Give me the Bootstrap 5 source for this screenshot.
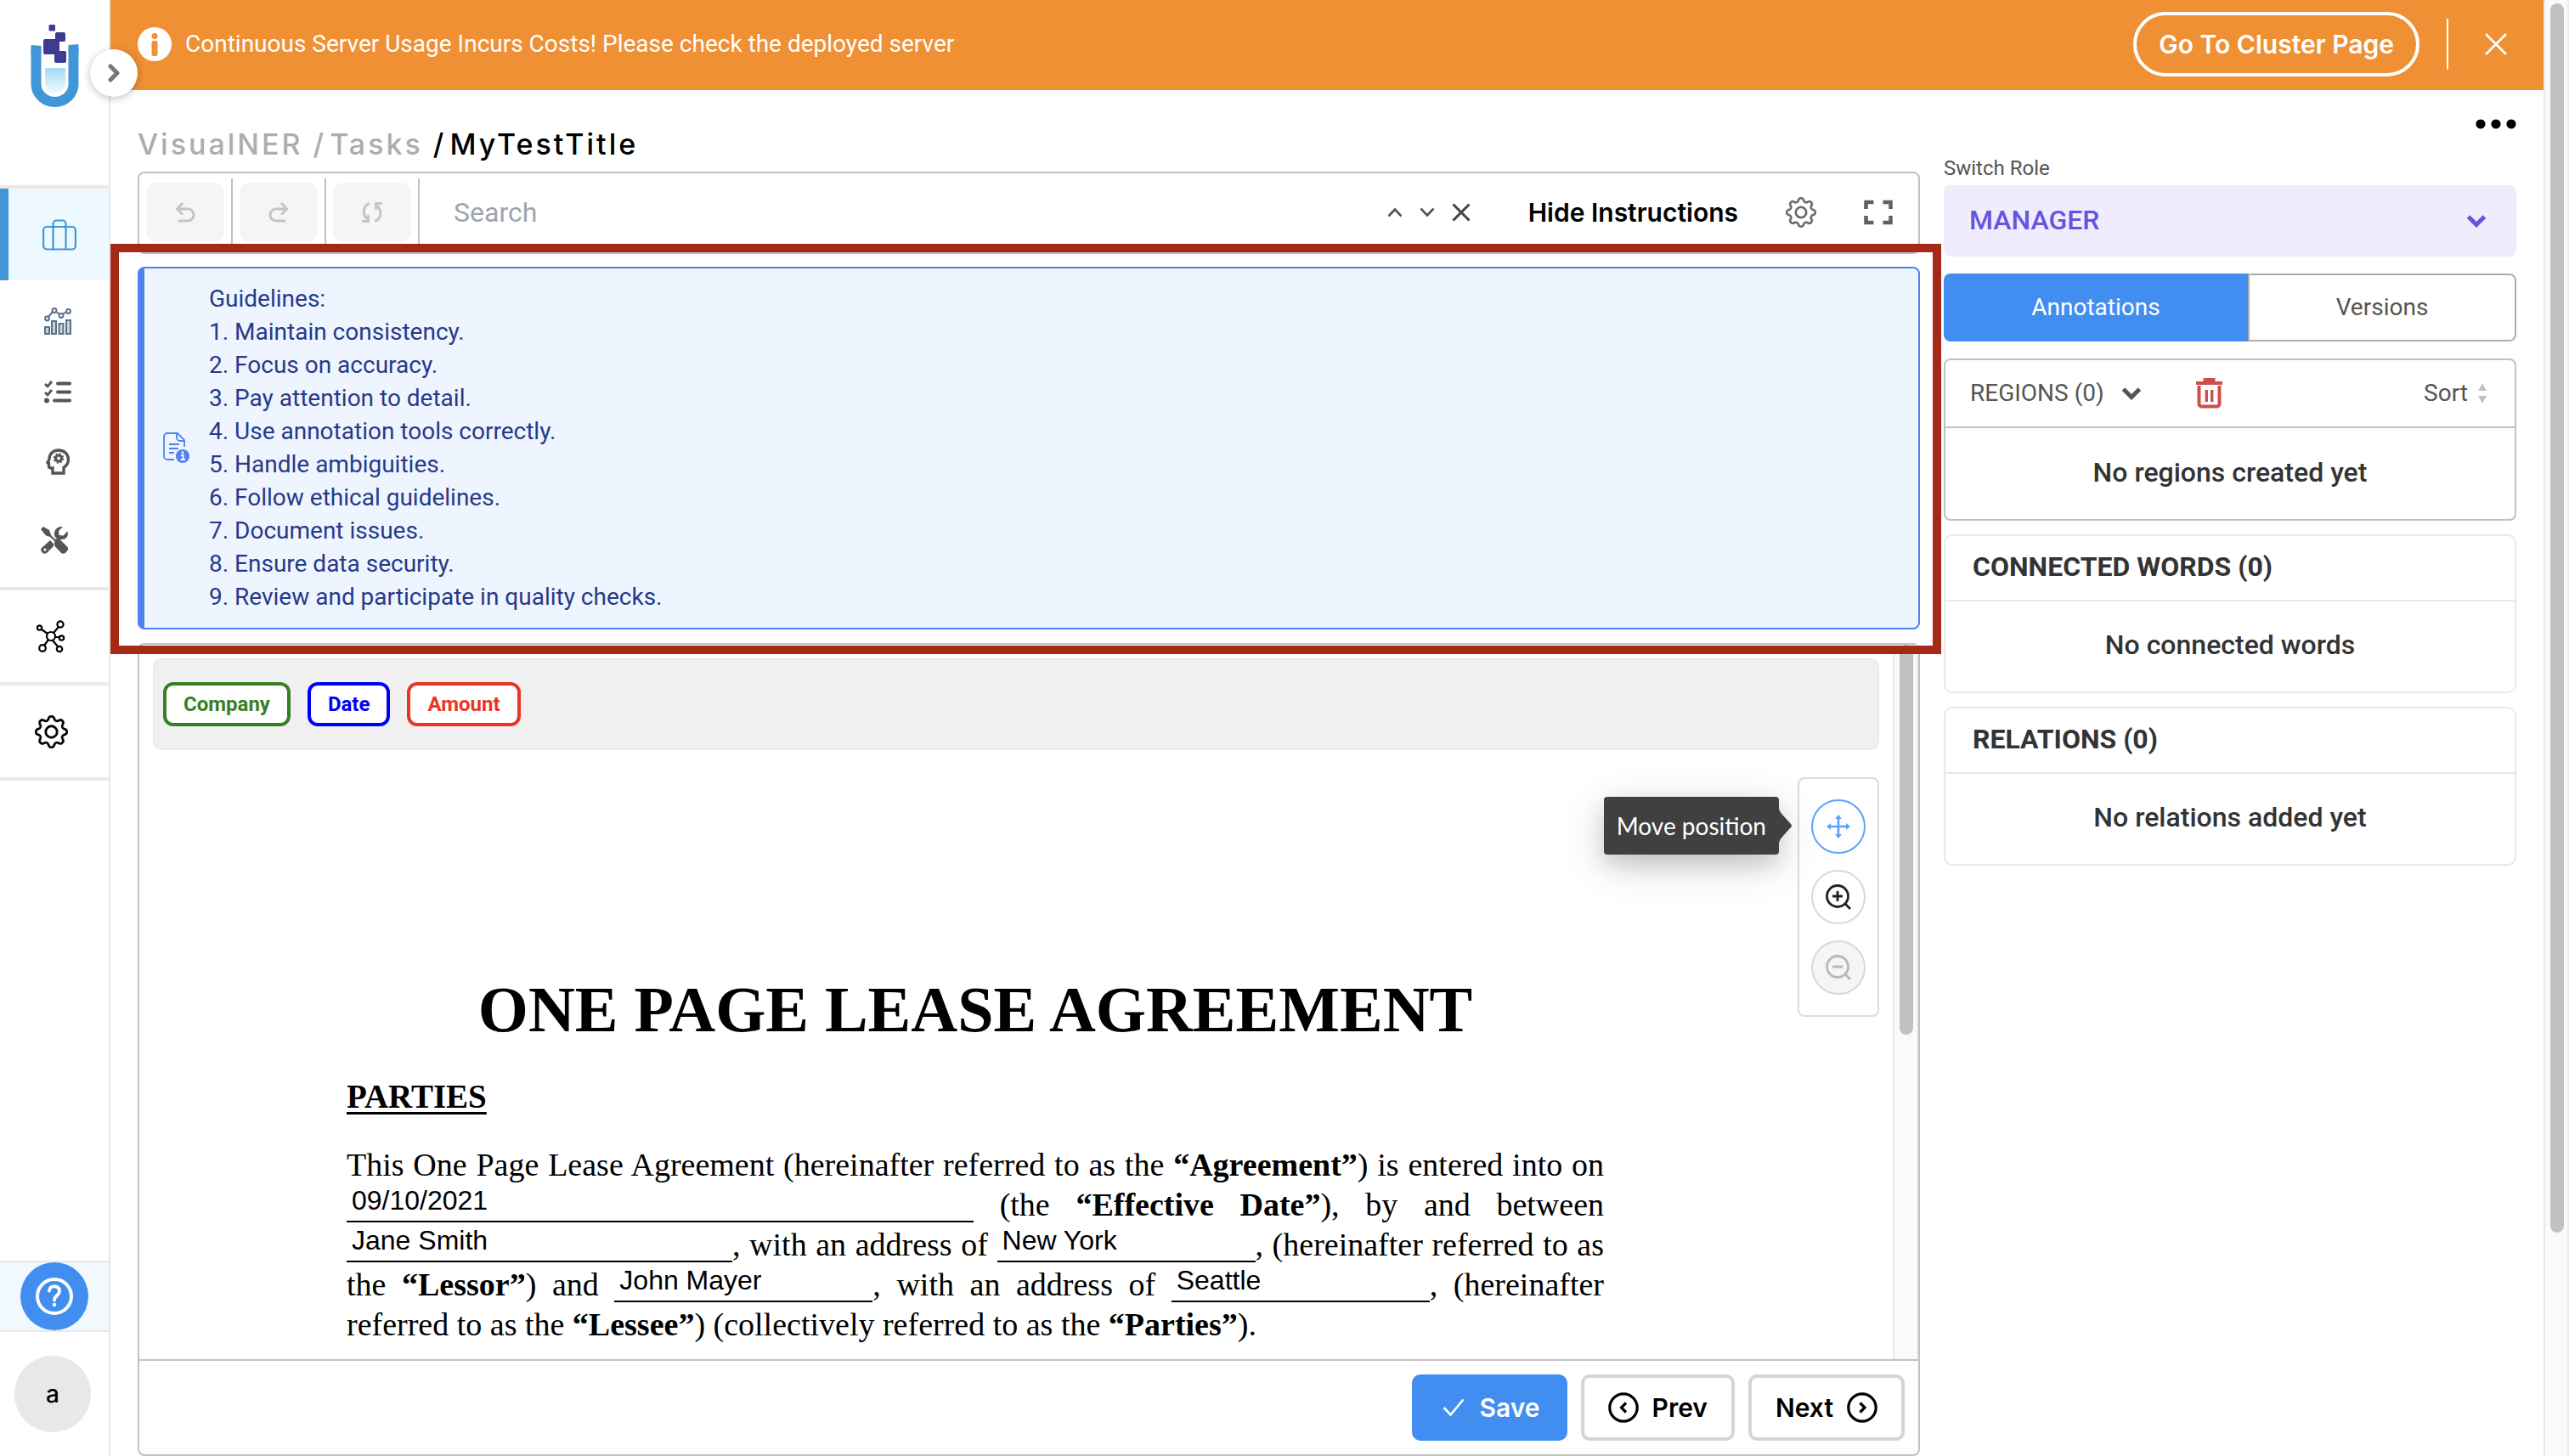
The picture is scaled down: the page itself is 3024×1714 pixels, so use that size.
<!DOCTYPE html>
<html lang="en">
<head>
<meta charset="utf-8">
<meta name="viewport" content="width=device-width, initial-scale=1">
<title>VisualNER - MyTestTitle</title>
<link href="https://cdn.jsdelivr.net/npm/bootstrap@5.3.0/dist/css/bootstrap.min.css" rel="stylesheet">
<style>
body{font-family:Roboto,"Liberation Sans",sans-serif;font-size:28px;line-height:40px;color:#333;background:#fff}
button{font-family:inherit;color:inherit}
svg{display:block;flex:none}
.plain{background:none;border:0;padding:0}
.brandfont{font-family:Inter,"Liberation Sans",sans-serif}
.shrinkable{min-width:0}
/* sidebar */
.side{width:130px;border-right:2px solid #e8e8e8;position:relative}
.side-link{display:flex;align-items:center;justify-content:center;color:#555;width:100%}
.side-top{height:222px;padding:28px 0 0 36px;border-bottom:4px solid #e9e9e9}
.side-active{height:108px;background:#eef9ff;border-left:10px solid #4096d6;color:#4096d6;padding-left:2px}
.side-group{height:365px;padding:32px 0 38px 8px;gap:53px;border-bottom:4px solid #e9e9e9}
.side-single{height:112px;border-bottom:4px solid #e9e9e9;color:#000;padding-right:8px}
.side-help{height:84px;border-top:2px solid #e8e8e8;border-bottom:2px solid #e8e8e8;background:#f1f9ff}
.help-dot{width:80px;height:80px;border-radius:50%;background:#418ef0;display:flex;align-items:center;justify-content:center;color:#fff}
.avatar{width:90px;height:90px;border-radius:50%;background:#e8e8e8;color:#000;font-weight:500;margin:28px 0 28px 17px}
.side-toggle{position:absolute;left:106px;top:58px;width:56px;height:56px;border-radius:50%;background:#fff;color:#777;box-shadow:0 2px 10px rgba(0,0,0,.25);z-index:5;display:flex;align-items:center;justify-content:center}
/* banner */
.banner{height:106px;background:#ef9034;color:#fff;padding:0 42px 2px 32px}
.btn-cluster{height:76px;border:4px solid #fff;border-radius:38px;font-size:30px;font-weight:600;padding:0 26px;color:#fff}
.banner-rule{width:2px;height:60px;background:#fff;margin:0 42px 0 32px}
/* main column */
.work{padding:0 32px 0 32px;gap:28px;min-height:0}
.crumbs{height:96px;padding-top:44px;font-size:34px;letter-spacing:3px;color:#adadad;font-weight:500;gap:4px}
.crumbs a{color:inherit;text-decoration:none}
.crumbs .here{color:#000}
.toolbar{height:97px;border:2px solid #c1c1c1;border-radius:8px;margin-bottom:15px;padding:0 30px 2px 0}
.tool-cell{height:80px;padding:5px 8px;border-right:2px solid #c1c1c1}
.tool-btn{width:92px;height:70px;border-radius:12px;background:#f5f5f5;color:#c4c4c4;display:flex;align-items:center;justify-content:center}
.find{font-size:32px;border:0;padding:0 0 0 40px;color:#333;outline:0;min-width:0}
.find::placeholder{color:#9ca3af;opacity:1}
.btn-hide{font-size:30px;font-weight:600;color:#000;margin:0 56px 0 68px}
.guide{position:relative;margin-bottom:16px}
.guide-box{background:#eef5fe;border:2px solid #4f82f0;border-left-width:8px;border-radius:8px;padding:16px 22px 17px;color:#26398a;gap:22px;line-height:39px}
.guide-mark{position:absolute;left:-32px;right:-25px;top:-27px;bottom:-29px;border:10px solid #a42a17;z-index:4;pointer-events:none}
.editor{border:2px solid #c1c1c1;border-radius:8px;min-height:0}
.stage{min-height:0;overflow:hidden}
.canvas{position:relative;padding:16px}
.labels{height:108px;background:#f0f0f0;border:2px solid #e9e9e9;border-radius:10px;gap:20px;padding:0 10px}
.chip{height:52px;border:4px solid;border-radius:12px;background:#fff;font-size:24px;font-weight:700;padding:0 20px;line-height:44px}
.chip-company{color:#377f23}.chip-date{color:#0000f5}.chip-amount{color:#ea3424}
.rail{width:30px;background:#fafafa;border-left:2px solid #e8e8e8;border-right:2px solid #ececec;padding:0 4px 0 6px}
.rail-thumb{width:16px;border-radius:8px;background:#c1c1c1}
.zoomer{position:absolute;right:16px;top:156px;width:96px;border:2px solid #dcdcdc;border-radius:8px;background:#fff;padding:24px 14px;gap:19px}
.round{width:64px;height:64px;border-radius:50%;border:2px solid #d9d9d9;background:#fff;color:#222;display:flex;align-items:center;justify-content:center}
.round.on{border-color:#5ba4fa;color:#5ba4fa}
.round.off{background:#f5f5f5;color:#b8b8b8}
.tip-box{position:absolute;right:134px;top:179px;height:68px;padding:14px 15px;background:#404040;color:#fff;border-radius:4px;font-family:Lato,sans-serif;box-shadow:0 12px 50px rgba(0,0,0,.17),0 12px 24px rgba(0,0,0,.12);white-space:nowrap}
.tip-box svg{position:absolute;left:100%;top:14px}
/* lease text */
.lease{width:1480px;margin:263px 0 0 228px;font-family:"Liberation Serif",serif;color:#000;font-size:38px;line-height:47px}
.lease h1{font-size:76px;line-height:84px;font-weight:700;text-align:center;margin:0 0 37px;white-space:nowrap}
.lease h2{font-size:39px;line-height:48px;font-weight:700;text-decoration:underline;text-decoration-thickness:3px;text-underline-offset:5px;margin:0 0 33px}
.ln{height:47px;text-align:justify;text-align-last:justify;white-space:nowrap}
.ln.end{text-align-last:left}
.fill{display:inline-block;width:304px;border-bottom:2px solid #000;font:32px/32px "Liberation Sans",sans-serif;vertical-align:7px;padding:0 0 8px 6px;text-align:left;text-align-last:left}
.fill.f-date{width:738px}.fill.f-name{width:454px}
/* footer */
.foot{height:112px;border-top:2px solid #c1c1c1;padding:0 16px;gap:16px}
.btn-step{height:78px;border-radius:10px;border:4px solid #d4d4da;background:#fff;color:#000;font-size:30px;font-weight:600;padding:0 28px;gap:16px}
.btn-step.go{background:#418ef0;border-color:#418ef0;color:#fff;gap:18px}
/* right panel */
.panel{width:674px}
.dots-row{padding-top:34px}
.role-label{font-size:24px;line-height:32px;color:#555;margin:30px 0 4px}
.role{height:84px;border:0;border-radius:8px;background:#f0ecfe;color:#6554dd;font-size:32px;font-weight:500;padding:0 30px 2px;appearance:none;width:100%}
.role-arrow{position:absolute;right:35px;top:34px;color:#6554dd;pointer-events:none}
.tabs{height:80px;margin:20px 0}
.tab-on{background:#418ef0;color:#fff;border-radius:8px 0 0 8px;width:358px}
.tab-off{border:2px solid #adadad;border-radius:0 8px 8px 0;color:#555}
.box{border:2px solid #e8e8e8;border-radius:10px;margin-bottom:16px;font-weight:500;font-size:32px}
.box-head{height:77px;border-bottom:2px solid #e8e8e8;padding:0 32px 3px;font-weight:700;font-size:32px}
.box-body{height:106px;padding-bottom:4px}
.box.strong{border-color:#c1c1c1;border-radius:8px}
.box.strong .box-head{height:80px;border-color:#c1c1c1;padding:0 29px;font-size:28px;font-weight:400;color:#555}
.box.strong .box-body{height:107px}
.fold{gap:20px}
</style>
</head>
<body>
<svg width="0" height="0" class="position-absolute" aria-hidden="true">
<symbol id="gear" viewBox="0 0 16 16"><g fill="currentColor" stroke="currentColor" stroke-width=".15"><path d="M8 4.754a3.246 3.246 0 1 0 0 6.492 3.246 3.246 0 0 0 0-6.492zM5.754 8a2.246 2.246 0 1 1 4.492 0 2.246 2.246 0 0 1-4.492 0z"/><path d="M9.796 1.343c-.527-1.79-3.065-1.79-3.592 0l-.094.319a.873.873 0 0 1-1.255.52l-.292-.16c-1.64-.892-3.433.902-2.54 2.541l.159.292a.873.873 0 0 1-.52 1.255l-.319.094c-1.79.527-1.79 3.065 0 3.592l.319.094a.873.873 0 0 1 .52 1.255l-.16.292c-.892 1.64.901 3.434 2.541 2.54l.292-.159a.873.873 0 0 1 1.255.52l.094.319c.527 1.79 3.065 1.79 3.592 0l.094-.319a.873.873 0 0 1 1.255-.52l.292.16c1.64.893 3.434-.902 2.54-2.541l-.159-.292a.873.873 0 0 1 .52-1.255l.319-.094c1.79-.527 1.79-3.065 0-3.592l-.319-.094a.873.873 0 0 1-.52-1.255l.16-.292c.893-1.64-.902-3.433-2.541-2.54l-.292.159a.873.873 0 0 1-1.255-.52l-.094-.319zm-2.633.283c.246-.835 1.428-.835 1.674 0l.094.319a1.873 1.873 0 0 0 2.693 1.115l.291-.16c.764-.415 1.6.42 1.184 1.185l-.159.292a1.873 1.873 0 0 0 1.116 2.692l.318.094c.835.246.835 1.428 0 1.674l-.319.094a1.873 1.873 0 0 0-1.115 2.693l.16.291c.415.764-.42 1.6-1.185 1.184l-.291-.159a1.873 1.873 0 0 0-2.693 1.116l-.094.318c-.246.835-1.428.835-1.674 0l-.094-.319a1.873 1.873 0 0 0-2.692-1.115l-.292.16c-.764.415-1.6-.42-1.184-1.185l.159-.291A1.873 1.873 0 0 0 1.945 8.93l-.319-.094c-.835-.246-.835-1.428 0-1.674l.319-.094A1.873 1.873 0 0 0 3.06 4.377l-.16-.292c-.415-.764.42-1.6 1.185-1.184l.292.159a1.873 1.873 0 0 0 2.692-1.115l.094-.319z"/></g></symbol>
<symbol id="caret" viewBox="0 0 24 16"><path d="M2.500 3l9.500 9.500L21.500 3" fill="none" stroke="currentColor" stroke-width="5"/></symbol>
<linearGradient id="liquid" x1="0" y1="0" x2="0" y2="1"><stop offset="0" stop-color="#a5d9f5"/><stop offset="1" stop-color="#f2faff"/></linearGradient>
</svg>

<div class="d-flex vh-100 overflow-hidden">
  <nav class="side d-flex flex-column flex-shrink-0" aria-label="Main">
    <a href="#" class="side-top d-block" aria-label="Home">
      <svg width="57" height="98" viewBox="0 0 57 98"><path d="M6.500 30v41a22 21 0 0 0 44 0V29" fill="none" stroke="#4096d6" stroke-width="12"/><path d="M.500 25l12 1v8H.500zM44.500 25l12-1v10h-12z" fill="#4096d6"/><path d="M17 52h24v18a12 12 0 0 1-24 0z" fill="url(#liquid)"/><g fill="#3e3c92"><rect x="21.500" y="1" width="7.500" height="7.500" rx="1.500"/><rect x="29" y="10" width="12" height="11" rx="2"/><rect x="15" y="18" width="19" height="18" rx="2"/><rect x="28" y="32" width="14" height="14" rx="2"/></g></svg>
    </a>
    <button class="side-toggle plain bg-white" aria-label="Expand menu"><svg width="14" height="22" viewBox="0 0 14 22" fill="none" stroke="currentColor" stroke-width="5" stroke-linecap="round" stroke-linejoin="round"><path d="M3 3l8 8-8 8"/></svg></button>
    <a href="#" class="side-link side-active" aria-label="Projects"><svg width="40" height="37" viewBox="0 0 40 37" fill="none" stroke="currentColor" stroke-width="2.200"><rect x="1.100" y="9" width="37.800" height="26.500" rx="4"/><path d="M12.500 35V5.500a4 4 0 0 1 4-4h7a4 4 0 0 1 4 4V35"/></svg></a>
    <div class="side-group d-flex flex-column">
      <a href="#" class="side-link" aria-label="Analytics"><svg width="32" height="32" viewBox="0 0 32 32" fill="#cbd1d8" stroke="#5b7189" stroke-width="2"><path d="M1 23h5v8H1zM9 16h5v15H9zM17.500 19h5v12h-5zM26 15h5v16h-5z"/><path d="M5 11l5-6M14 5l4 3M22 8l4-3" fill="none"/><g fill="#fff"><circle cx="3.500" cy="13" r="2.400"/><circle cx="12" cy="3.500" r="2.400"/><circle cx="20" cy="9.500" r="2.400"/><circle cx="28.500" cy="4.500" r="2.400"/></g></svg></a>
      <a href="#" class="side-link" aria-label="Tasks"><svg width="32" height="28" viewBox="0 0 32 28" fill="none" stroke="currentColor"><path d="M16 4.500h14M16 14.500h14M12 24.500h18" stroke-width="4" stroke-linecap="round"/><path d="M1 5l3 3 5-6M1 15l3 3 5-6" stroke-width="2.800"/><circle cx="3" cy="24.500" r="3" fill="currentColor" stroke="none"/></svg></a>
      <a href="#" class="side-link" aria-label="Models"><svg width="28" height="31" viewBox="0 0 28 31" fill="none" stroke="currentColor"><path d="M8 29v-6H5.500a2 2 0 0 1-2-2v-3.500L2 16.500l2-4C4 6 9 2 15 2c7 0 11.500 5 11.500 11 0 4.500-2 7-5.500 9.500V29z" stroke-width="3.400"/><circle cx="15" cy="11.500" r="3.500" stroke-width="3.200"/><circle cx="15" cy="11.500" r="5.400" stroke-width="1.800" stroke-dasharray="2.120 2.120"/></svg></a>
      <a href="#" class="side-link pe-2 pt-2" aria-label="Tools"><svg width="32" height="32" viewBox="0 0 32 32" fill="currentColor"><path d="M0 3l3-3 7 4 2 6 5 5c3-1.500 5-.5 6.500 1l8 8c1 1.500 1 3-.5 4.500l-2 2.500c-1.500 1-3.500 1-5 0l-7-7.500c-1.500-2-1.500-4-.5-6l-5.500-5.500-5-1.500L0 3z"/><path d="M26 0l-5 5 .500 5 5 .500 5-5c1.500 5-1.500 9.500-6 9.500-1.500 0-3 0-4.500 1L17 12.500C13.500 6 19-1 26 0z"/><path fill-rule="evenodd" d="M11 16l4 4v3l-7.500 7.500A4.300 4.300 0 0 1 1 25zM5 25.500a1.600 1.600 0 1 0 .010 3.200 1.600 1.600 0 0 0-.010-3.200z"/></svg></a>
    </div>
    <a href="#" class="side-link side-single" aria-label="Hub"><svg width="34" height="38" viewBox="0 0 34 38" fill="none" stroke="currentColor" stroke-width="2.200"><circle cx="17" cy="19" r="5"/><circle cx="3.500" cy="9" r="2.700"/><circle cx="28" cy="5" r="3.600"/><circle cx="29.500" cy="21" r="2.700"/><circle cx="7" cy="33" r="3.800"/><circle cx="27" cy="34" r="3.200"/><path d="M6 11l7 5M26 8l-6 7M22 20h5M14 23l-5 7M19 24l6 7"/></svg></a>
    <a href="#" class="side-link side-single" aria-label="Settings"><svg width="39" height="39"><use href="#gear"/></svg></a>
    <div class="mt-auto">
      <a href="#" class="side-link side-help" aria-label="Help"><span class="help-dot"><svg width="44" height="44" viewBox="0 0 44 44" fill="none" stroke="currentColor"><circle cx="22" cy="22" r="20" stroke-width="4"/><path d="M16 15.500c0-7 12-7.500 12 .5 0 5-6 5-6 10.500" stroke-width="4" stroke-linecap="round"/><circle cx="22" cy="32" r="2.200" fill="currentColor" stroke="none"/></svg></span></a>
      <button class="avatar border-0 p-0 brandfont d-block">a</button>
    </div>
  </nav>

  <div class="d-flex flex-column flex-grow-1 shrinkable">
    <div class="banner d-flex align-items-center flex-shrink-0" role="alert">
      <svg width="40" height="40" viewBox="0 0 40 40"><circle cx="20" cy="20" r="20" fill="#fff"/><g fill="#ef9034"><circle cx="20" cy="10.500" r="3.500"/><rect x="16.500" y="16" width="7" height="18" rx="2"/></g></svg>
      <span class="ms-3 flex-grow-1">Continuous Server Usage Incurs Costs! Please check the deployed server</span>
      <button class="btn-cluster brandfont btn">Go To Cluster Page</button>
      <span class="banner-rule"></span>
      <button class="plain" aria-label="Close"><svg width="28" height="28" viewBox="0 0 28 28" fill="none" stroke="currentColor" stroke-width="2.600"><path d="M2 2l24 24M26 2L2 26"/></svg></button>
    </div>

    <div class="work d-flex flex-grow-1">
      <main class="d-flex flex-column flex-grow-1 shrinkable">
        <nav class="crumbs brandfont d-flex flex-shrink-0" aria-label="Breadcrumb">
          <a href="#">VisualNER</a><span class="ms-2">/</span><a href="#">Tasks</a><span class="here ms-2">/</span><span class="here">MyTestTitle</span>
        </nav>

        <div class="toolbar d-flex align-items-center flex-shrink-0">
          <div class="tool-cell"><button class="tool-btn border-0 p-0" disabled aria-label="Undo"><svg width="24" height="24" viewBox="0 0 24 24" fill="none" stroke="currentColor" stroke-width="3"><path d="M9 1L2.500 8 9 14.500M3 8h12a7 7 0 0 1 0 14H4"/></svg></button></div>
          <div class="tool-cell"><button class="tool-btn border-0 p-0" disabled aria-label="Redo"><svg width="24" height="24" viewBox="0 0 24 24" fill="none" stroke="currentColor" stroke-width="3"><path d="M15 1l6.500 7L15 14.500M21 8H9a7 7 0 0 0 0 14h11"/></svg></button></div>
          <div class="tool-cell"><button class="tool-btn border-0 p-0" disabled aria-label="Reset"><svg width="24" height="24" viewBox="0 0 24 24" fill="none" stroke="currentColor" stroke-width="3"><path d="M9 1.500C1 4 0 15 7 20.500M0 22.500h7.500V15M15 22.500C23 20 24 9 17 3.500M24 1.500h-7.500V9"/></svg></button></div>
          <input class="find flex-grow-1" type="text" placeholder="Search" aria-label="Search">
          <button class="plain" aria-label="Previous match"><svg width="18" height="12" viewBox="0 0 18 12" fill="none" stroke="#555" stroke-width="2.600"><path d="M1.500 10.500L9 2.500l7.500 8"/></svg></button>
          <button class="plain mx-3 px-1" aria-label="Next match"><svg width="18" height="12" viewBox="0 0 18 12" fill="none" stroke="#555" stroke-width="2.600"><path d="M1.500 1.500L9 9.500l7.500-8"/></svg></button>
          <button class="plain" aria-label="Clear search"><svg width="22" height="22" viewBox="0 0 22 22" fill="none" stroke="#444" stroke-width="3"><path d="M1.500 1.500l19 19M20.500 1.500l-19 19"/></svg></button>
          <button class="btn-hide border-0 bg-transparent p-0 brandfont">Hide Instructions</button>
          <button class="plain" aria-label="Settings"><svg width="36" height="36" color="#666"><use href="#gear"/></svg></button>
          <button class="plain ms-5 ps-2" aria-label="Full screen"><svg width="34" height="30" viewBox="0 0 34 30" fill="none" stroke="#606060" stroke-width="4.500"><path d="M2.500 11V3h9M22.500 3h9v8M31.500 19v8h-9M11.500 27h-9v-8"/></svg></button>
        </div>

        <section class="guide flex-shrink-0">
          <div class="guide-box d-flex align-items-center">
            <svg width="32" height="36" viewBox="0 0 32 36" fill="none" stroke="#4f82f0" stroke-width="1.800"><path d="M13 32H5a4 4 0 0 1-4-4V5a4 4 0 0 1 4-4h12l8 8v8M16 1v5a4 4 0 0 0 4 4h5M7 14h12M7 19h11M7 24h6"/><circle cx="23" cy="28" r="8" fill="#4f82f0" stroke="none"/><path d="M21 27h2.500v5M20.500 32h5.500" stroke="#fff"/><circle cx="23" cy="23.800" r="1.400" fill="#fff" stroke="none"/></svg>
            <div>Guidelines:<br>1. Maintain consistency.<br>2. Focus on accuracy.<br>3. Pay attention to detail.<br>4. Use annotation tools correctly.<br>5. Handle ambiguities.<br>6. Follow ethical guidelines.<br>7. Document issues.<br>8. Ensure data security.<br>9. Review and participate in quality checks.</div>
          </div>
          <div class="guide-mark"></div>
        </section>

        <section class="editor d-flex flex-column flex-grow-1">
          <div class="stage d-flex flex-grow-1">
            <div class="canvas flex-grow-1">
              <div class="labels d-flex align-items-center">
                <button class="chip chip-company">Company</button>
                <button class="chip chip-date">Date</button>
                <button class="chip chip-amount">Amount</button>
              </div>
              <article class="lease">
                <h1>ONE PAGE LEASE AGREEMENT</h1>
                <h2>PARTIES</h2>
                <div class="ln">This One Page Lease Agreement (hereinafter referred to as the <b>“Agreement”</b>) is entered into on</div>
                <div class="ln"><span class="fill f-date">09/10/2021</span> (the <b>“Effective Date”</b>), by and between</div>
                <div class="ln"><span class="fill f-name">Jane Smith</span>, with an address of <span class="fill">New York</span>, (hereinafter referred to as</div>
                <div class="ln">the <b>“Lessor”</b>) and <span class="fill">John Mayer</span>, with an address of <span class="fill">Seattle</span>, (hereinafter</div>
                <div class="ln end">referred to as the <b>“Lessee”</b>) (collectively referred to as the <b>“Parties”</b>).</div>
              </article>
              <div class="zoomer d-flex flex-column">
                <button class="round on" aria-label="Move position"><svg width="28" height="28" viewBox="0 0 28 28" fill="none" stroke="currentColor" stroke-width="2.600"><path d="M14 2v24M2 14h24"/><path d="M14 0l4 5h-8zM14 28l4-5h-8zM0 14l5-4v8zM28 14l-5-4v8z" fill="currentColor" stroke="none"/></svg></button>
                <button class="round" aria-label="Zoom in"><svg width="30" height="30" viewBox="0 0 30 30" fill="none" stroke="currentColor" stroke-width="2.800"><circle cx="14" cy="14" r="12.500"/><path d="M23 23l6 6M8 14h12M14 8v12"/></svg></button>
                <button class="round off" disabled aria-label="Zoom out"><svg width="30" height="30" viewBox="0 0 30 30" fill="none" stroke="currentColor" stroke-width="2.800"><circle cx="14" cy="14" r="12.500"/><path d="M23 23l6 6M8 14h12"/></svg></button>
              </div>
              <div class="tip-box" role="tooltip">Move position<svg width="15" height="40" viewBox="0 0 15 40"><path d="M0 0q1 4 4 7l10 11q2 2 0 4L4 33q-3 3-4 7z" fill="#404040"/></svg></div>
            </div>
            <div class="rail flex-shrink-0"><div class="rail-thumb" style="height:54.6%"></div></div>
          </div>
          <div class="foot d-flex align-items-center justify-content-end flex-shrink-0">
            <button class="btn-step go brandfont d-flex align-items-center"><svg class="ms-1" width="26" height="22" viewBox="0 0 26 22" fill="none" stroke="currentColor" stroke-width="2.600"><path d="M1.500 11l8 8.500L24.500 1.500"/></svg>Save</button>
            <button class="btn-step brandfont d-flex align-items-center"><svg width="36" height="36" viewBox="0 0 36 36" fill="none" stroke="currentColor" stroke-width="3.200"><circle cx="18" cy="18" r="16.200"/><path d="M21 12.500L15.500 18l5.500 5.500"/></svg>Prev</button>
            <button class="btn-step brandfont d-flex align-items-center">Next<svg width="36" height="36" viewBox="0 0 36 36" fill="none" stroke="currentColor" stroke-width="3.200"><circle cx="18" cy="18" r="16.200"/><path d="M15.500 12.500L21 18l-5.500 5.500"/></svg></button>
          </div>
        </section>
      </main>

      <aside class="panel flex-shrink-0">
        <div class="dots-row d-flex justify-content-end"><button class="plain" aria-label="More"><svg width="48" height="12" viewBox="0 0 48 12"><circle cx="6" cy="6" r="5.600"/><circle cx="24" cy="6" r="5.600"/><circle cx="42" cy="6" r="5.600"/></svg></button></div>
        <label for="role" class="role-label d-block">Switch Role</label>
        <div class="position-relative">
          <select id="role" class="role"><option>MANAGER</option></select>
          <svg class="role-arrow" width="24" height="16"><use href="#caret"/></svg>
        </div>
        <div class="tabs d-flex" role="tablist">
          <button class="tab-on border-0" role="tab" aria-selected="true">Annotations</button>
          <button class="tab-off bg-white flex-grow-1" role="tab" aria-selected="false">Versions</button>
        </div>
        <section class="box strong">
          <div class="box-head d-flex align-items-center">
            <button class="plain fold d-flex align-items-center">REGIONS (0)<svg width="24" height="16"><use href="#caret"/></svg></button>
            <button class="plain ms-5 ps-3" aria-label="Delete all regions"><svg width="31" height="36" viewBox="0 0 31 36" fill="none" stroke="#cf4f48" stroke-width="4"><path d="M0 6h31M8.500 2h14" /><path d="M3.500 9v21.500a3 3 0 0 0 3 3h18a3 3 0 0 0 3-3V9"/><path d="M12.300 14v14M18.700 14v14" stroke-width="3.400"/></svg></button>
            <button class="plain ms-auto me-1 d-flex align-items-center gap-2">Sort<svg class="ms-1" width="10" height="24" viewBox="0 0 10 24" fill="#c1c1c1"><path d="M5 0l5 9H0zM5 24l5-9H0z"/></svg></button>
          </div>
          <div class="box-body d-flex align-items-center justify-content-center">No regions created yet</div>
        </section>
        <section class="box">
          <h2 class="box-head d-flex align-items-center mb-0">CONNECTED WORDS (0)</h2>
          <div class="box-body d-flex align-items-center justify-content-center">No connected words</div>
        </section>
        <section class="box">
          <h2 class="box-head d-flex align-items-center mb-0">RELATIONS (0)</h2>
          <div class="box-body d-flex align-items-center justify-content-center">No relations added yet</div>
        </section>
      </aside>
    </div>
  </div>

  <div class="rail flex-shrink-0 pt-1"><div class="rail-thumb" style="height:84.6%"></div></div>
</div>
<script src="https://cdn.jsdelivr.net/npm/bootstrap@5.3.0/dist/js/bootstrap.bundle.min.js"></script>
</body>
</html>
